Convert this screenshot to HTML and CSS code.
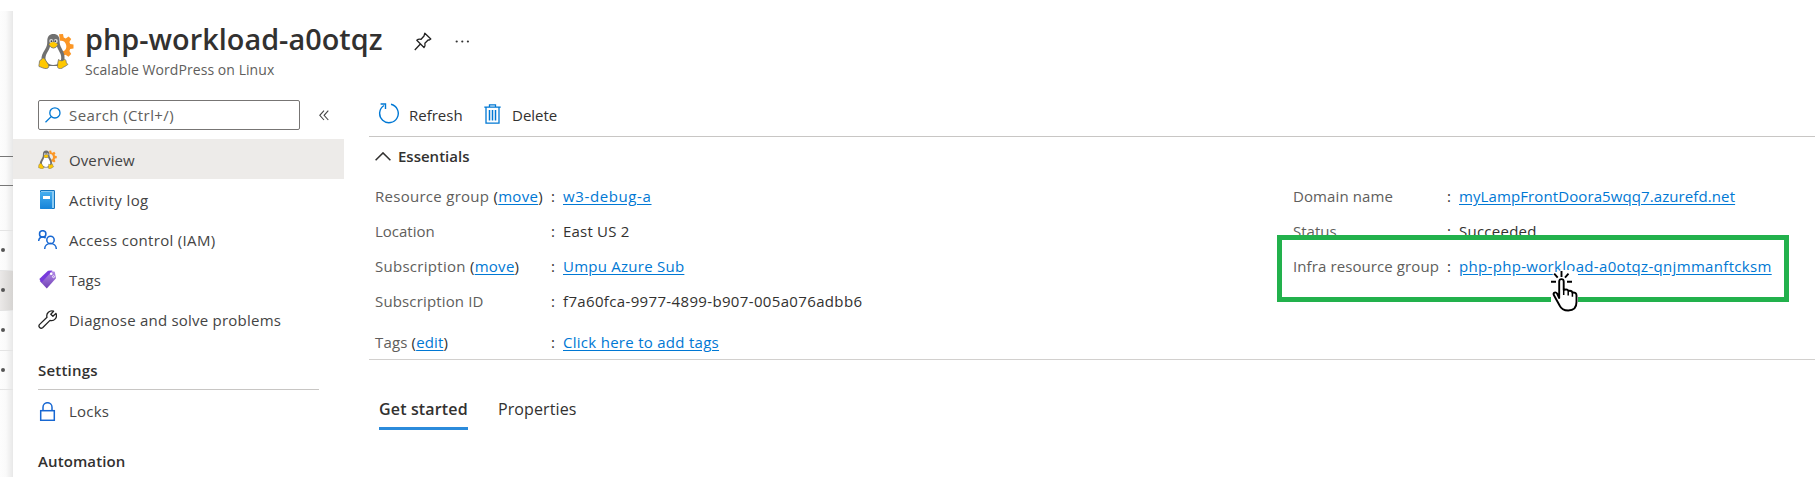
FILE: index.html
```
<!DOCTYPE html>
<html lang="en">
<head>
<meta charset="utf-8">
<title>php-workload-a0otqz</title>
<link rel="stylesheet" href="styles.css">
</head>
<body>
<svg width="0" height="0" class="defs" aria-hidden="true">
  <defs>
    <linearGradient id="book-fill" x1="0" y1="0" x2="0" y2="1"><stop offset="0" stop-color="#45aeef"/><stop offset="1" stop-color="#1683d8"/></linearGradient>
    <linearGradient id="tag-fill" x1="0" y1="0" x2="0" y2="1"><stop offset="0" stop-color="#b48be8"/><stop offset="1" stop-color="#7040b5"/></linearGradient>
    <symbol id="tux" viewBox="0 0 36 36">
      <path fill="#fb9625" d="M21 1.3l4-.3.7 3.5 2 .9 2.9-2 2.6 2.6-1.8 3 .8 2 3.3.6v3.8l-3.3.7-.8 2 1.8 3-2.7 2.6-3-2-1.8.8-1-4a5.6 5.6 0 0 0-2.6-10.8z"/>
      <path fill="#707070" d="M15.500 1c4 0 6 2.400 6 6.500 0 3 .5 5 2.300 8.200 2.200 3.800 3.200 7 2.600 11.300L24 33H7L3.500 27c-.3-4 1-6.500 3.500-10.500 2-3.400 2.300-5 2.300-8.500C9.300 3.500 11.500 1 15.500 1z"/>
      <path fill="#fff" d="M12 13.500c2 2.500 5 2.500 7 0 1 4 4.700 7 4.200 12-.3 3-2.700 6.500-8 6.500S7 28 7.500 24.500C8 20 11 18 12 13.500z"/>
      <circle cx="13.200" cy="8" r="2" fill="#ddd"/><circle cx="17.800" cy="8" r="2" fill="#ddd"/>
      <circle cx="13.500" cy="8.200" r=".9" fill="#444"/><circle cx="17.300" cy="8.200" r=".9" fill="#444"/>
      <path fill="#ffc800" d="M11 11.300c1.300-1.600 3-2.400 4.300-2.400s3.200 1 4.400 2.300c-1 2-2.700 3.500-4.400 3.500-1.600 0-3.200-1.600-4.300-3.400z"/>
      <path fill="#ffc800" stroke="#707070" stroke-width=".8" d="M1 33.500c-.4-1.300.5-3 .4-4.600 0-1.500.8-1.900 2-2.200 1-1.700 2.200-2.300 3.600-.4l3.500 5.400c.8 1.800.3 3.300-1.800 3.800C6 36 3.500 34 1 33.500z"/>
      <path fill="#ffc800" stroke="#707070" stroke-width=".8" d="M20.500 26.500c1.700 1.800 4.700 1.800 5.900-.3 1.600.3 1.700 2 2 3.500l1.400 1.800c-2 1.700-4 2.300-5.600 3.600-2 1.400-4.700.5-4.700-1.800.2-2.200.3-4.600 1-6.800z"/>
    </symbol>
  </defs>
</svg>

<div class="screen">
  <div class="underlay" aria-hidden="true">
    <div class="u-box"></div>
    <div class="u-gap"></div>
    <div class="u-row"></div>
    <div class="u-row u-selected"></div>
    <div class="u-row"></div>
    <div class="u-row"></div>
  </div>

  <div class="blade">
    <header class="head">
      <svg class="head-icon" width="36" height="36"><use href="#tux"/></svg>
      <div class="head-text">
        <div class="title-row">
          <h1 class="title">php-workload-a0otqz</h1>
          <svg class="pin" width="18" height="19" viewBox="0 0 18 19" fill="none" stroke="#222" stroke-width="1.300" stroke-linejoin="round"><path d="M10.800 1.200l6 5.800-1.500 1.100-1.200-.1-3.200 3.300c.4 1.700 0 3.200-.9 4.200L2.800 8.300c1-1 2.600-1.500 4.300-1L10 4zM6.400 12L.8 18"/></svg>
          <svg class="dots" width="15" height="3" viewBox="0 0 15 3" fill="#333"><circle cx="1.700" cy="1.500" r="1.100"/><circle cx="7.300" cy="1.500" r="1.100"/><circle cx="12.900" cy="1.500" r="1.100"/></svg>
        </div>
        <div class="subtitle">Scalable WordPress on Linux</div>
      </div>
    </header>

    <div class="body">
      <nav class="side">
        <div class="search-row">
          <div class="search">
            <svg width="16" height="16" viewBox="0 0 16 16" fill="none" stroke="#0078d4" stroke-width="1.300"><circle cx="9.900" cy="5.900" r="5.100"/><path d="M6.200 9.600L.5 15.300"/></svg>
            <span class="t-search">Search (Ctrl+/)</span>
          </div>
          <svg class="collapse" width="10" height="11" viewBox="0 0 10 11" fill="none" stroke="#444" stroke-width="1.100"><path d="M5 .7L.8 5.300 5 10M9.300.7L5.100 5.300 9.300 10"/></svg>
        </div>
        <a class="item active"><svg width="19" height="19"><use href="#tux"/></svg><span class="t-overview">Overview</span></a>
        <a class="item"><svg width="19" height="19" viewBox="0 0 19 19"><rect x="2" y="0" width="15" height="19" rx="1.200" fill="#1474bd"/><rect x="3" y="1" width="13" height="17" fill="#8bcaf2"/><path d="M2 2h12v17H3.200A1.200 1.200 0 0 1 2 17.800z" fill="url(#book-fill)"/><rect x="5" y="6" width="7" height="3" fill="#fff"/></svg><span class="t-activity">Activity log</span></a>
        <a class="item"><svg width="19" height="19" viewBox="0 0 19 19" fill="none" stroke="#1767d2" stroke-width="1.500"><circle cx="4.700" cy="3.900" r="3.200"/><path d="M.7 11c0-2.500 1.600-3.900 4-3.900 1.200 0 2.200.3 2.900 1"/><circle cx="12.500" cy="9.900" r="3.700"/><path d="M6.700 19c0-3.300 2.500-5.400 5.800-5.400s5.800 2.100 5.800 5.400"/></svg><span class="t-access">Access control (IAM)</span></a>
        <a class="item"><svg width="19" height="19" viewBox="0 0 19 19"><path d="M11.500.8l5.300.9 1.200 6.500-9.200 10.300L1.700 11z" fill="url(#tag-fill)"/><path d="M1.300 9L10 .7l4.500-.2L3.700 12.500z" fill="#773adc"/><circle cx="13.200" cy="3.700" r="1.300" fill="#fff"/><circle cx="15.500" cy="6.700" r="1" fill="none" stroke="#fff" stroke-width=".8"/></svg><span class="t-tags">Tags</span></a>
        <a class="item"><svg width="19" height="19" viewBox="0 0 19 19" fill="none" stroke="#222" stroke-width="1.300" stroke-linejoin="round"><path d="M15.600 1.200A5 5 0 0 0 9 7.300L1.400 14.600a2.300 2.300 0 0 0 3.200 3.200L12 10.400a5 5 0 0 0 5.900-7l-3 2.800-2.100-2z"/></svg><span class="t-diagnose">Diagnose and solve problems</span></a>
        <div class="section"><span class="t-settings">Settings</span></div>
        <a class="item locks"><svg width="19" height="19" viewBox="0 0 19 19" fill="none" stroke="#1767d2" stroke-width="1.500"><rect x="2.700" y="8.700" width="13.600" height="9.600"/><path d="M5 8.700V5.200a4.500 4.500 0 0 1 9 0v3.500"/></svg><span class="t-locks">Locks</span></a>
        <div class="section last"><span class="t-automation">Automation</span></div>
      </nav>

      <main class="main">
        <div class="toolbar">
          <svg width="21" height="21" viewBox="0 0 21 21" fill="none" stroke="#0078d4" stroke-width="1.400"><path d="M13 1.300A9.300 9.300 0 1 1 6 2.500M2.600 1h4.900v5"/></svg>
          <span class="t-refresh">Refresh</span>
          <svg class="trash" width="17" height="20" viewBox="0 0 17 20" fill="none" stroke="#0078d4" stroke-width="1.300"><path d="M.3 3.200h16.400M5.500 3V.8h6V3M2 3.200v16h13v-16"/><path d="M5.500 6v10.500M8.500 6v10.500M11.500 6v10.500" stroke-width="1.500"/></svg>
          <span class="t-delete">Delete</span>
        </div>
        <section class="essentials">
          <div class="ess-head"><svg width="16" height="9" viewBox="0 0 16 9" fill="none" stroke="#323130" stroke-width="1.500"><path d="M.6 8.300L8 .9l7.400 7.400"/></svg><span class="t-essentials">Essentials</span></div>
          <div class="ess-cols">
            <dl class="facts">
              <dt><span class="t-rg">Resource group <b>(</b><a>move</a><b>)</b></span></dt><dd><a class="t-w3">w3-debug-a</a></dd>
              <dt><span class="t-location">Location</span></dt><dd><span class="t-east">East US 2</span></dd>
              <dt><span class="t-sub">Subscription <b>(</b><a>move</a><b>)</b></span></dt><dd><a class="t-umpu">Umpu Azure Sub</a></dd>
              <dt><span class="t-subid">Subscription ID</span></dt><dd><span class="t-guid">f7a60fca-9977-4899-b907-005a076adbb6</span></dd>
              <dt><span class="t-tagsedit">Tags <b>(</b><a>edit</a><b>)</b></span></dt><dd><a class="t-click">Click here to add tags</a></dd>
            </dl>
            <dl class="facts right">
              <dt><span class="t-domain">Domain name</span></dt><dd><a class="t-lamp">myLampFrontDoora5wqq7.azurefd.net</a></dd>
              <dt><span class="t-status">Status</span></dt><dd><span class="t-succ">Succeeded</span></dd>
              <dt><span class="t-infra">Infra resource group</span></dt><dd><a class="t-php">php-php-workload-a0otqz-qnjmmanftcksm</a></dd>
            </dl>
          </div>
        </section>
        <div class="tabs">
          <a class="tab on"><span class="t-get">Get started</span></a>
          <a class="tab"><span class="t-props">Properties</span></a>
        </div>
      </main>
    </div>
  </div>

  <div class="highlight"></div>
  <svg class="hand" width="28" height="43" viewBox="0 0 28 43" fill="none" stroke="#000" stroke-width="1.900">
    <path fill="#fff" stroke="none" d="M1 5L10 0h10l7 4v39H0V20z"/>
    <path d="M10.500 1v6M3.200 3.700l3.500 4M17.500 3.700l-3.500 4M0 11.700h5M16 11.700h5"/>
    <path fill="#fff" stroke-linejoin="round" d="M8.200 28V11.500c0-3.200 4.500-3.200 4.500 0v8.300c3.300-.9 4.300 0 4.600 1.200 2.200-.5 3.700 0 4 1.500 2.800-.3 4.200.9 4.200 3V32c0 5.500-3.200 8.500-8.300 8.500-4.200 0-7-1.600-8.700-5.200L2.800 25c-1-2.600 1.900-3.500 3.300-1.500z"/>
    <path d="M12.700 19.500V25M17.200 21.500V25.500M21.400 22.700v4" stroke-width="1.500"/>
  </svg>
</div>
</body>
</html>
```
FILE: styles.css
```
* { box-sizing: border-box; }
body { margin: 0; background: #fff; color: #323130; font: 15px/20px "Open Sans", "Noto Sans", sans-serif; overflow: hidden; }
h1, dl, dd { margin: 0; }
.defs { position: absolute; }
.screen { position: relative; display: flex; height: 477px; padding-top: 11px; overflow: hidden; }

.underlay { width: 13px; flex: none; padding-top: 145px; background: linear-gradient(90deg, #fdfdfd 0, #fafafa 45%, #e8e8e8 100%); }
.u-box { height: 30px; border: solid #777; border-width: 1px 0; }
.u-gap { height: 44px; }
.u-row { height: 40px; border-top: 1px solid #e4e4e4; padding-top: 17px; }
.u-row:last-child { border-bottom: 1px solid #e4e4e4; }
.u-row::before { content: ""; display: block; width: 4px; height: 4px; margin-left: 1px; border-radius: 50%; background: #555; }
.u-selected { background: linear-gradient(90deg, #ebe9e8, #d6d4d2); }

.blade { flex: 1; min-width: 0; background: #fff; }
.head { display: flex; height: 82px; padding: 22px 0 0 25px; }
.head-icon { flex: none; margin-right: 11px; }
.title-row { display: flex; align-items: center; height: 36px; margin-top: -12px; }
.title { width: 297px; font-size: 28.800px; line-height: 36px; font-weight: 600; letter-spacing: .04px; white-space: nowrap; }
.pin { margin: 4px 0 0 32px; }
.dots { margin: 4px 0 0 23px; }
.subtitle { margin-top: 3px; font-size: 14px; line-height: 20px; letter-spacing: .06px; color: #605e5c; white-space: nowrap; }

.body { display: flex; }
.side { width: 331px; flex: none; }
.search-row { display: flex; align-items: center; height: 46px; padding: 0 0 2px 25px; }
.search { display: flex; align-items: center; gap: 7px; width: 262px; height: 30px; padding-left: 6px; border: 1px solid #777574; border-radius: 2px; color: #605e5c; }
.search span { padding-left: 1px; }
.collapse { margin-left: 19px; }
.item { display: flex; align-items: center; gap: 12px; height: 40px; padding-left: 25px; white-space: nowrap; color: #444; }
.item span { padding-top: 1px; }
.item.active { background: #edebe9; }
.section { width: 281px; height: 51px; margin-left: 25px; padding-top: 21px; border-bottom: 1px solid #c8c6c4; font-weight: 600; }
.locks { height: 43px; padding-bottom: 1px; }
.locks span { padding-top: 0; }
.section.last { padding-top: 18px; border: 0; }

.main { flex: 1; min-width: 0; padding-left: 25px; }
.toolbar { display: flex; align-items: center; height: 44px; padding: 0 0 2px 9px; border-bottom: 1px solid #c8c6c4; }
.toolbar span { margin-left: 10px; width: 52px; padding-top: 2px; }
.toolbar .trash { margin-left: 23px; }
.toolbar .t-delete { margin-left: 11px; }
.essentials { height: 214px; border-bottom: 1px solid #d2d0ce; padding-left: 6px; }
.ess-head { display: flex; align-items: center; gap: 7px; height: 20px; margin-top: 9px; font-weight: 600; }
.ess-cols { display: flex; margin-top: 13px; }
.facts { display: grid; grid-template-columns: 177px auto; grid-auto-rows: 35px; width: 918px; line-height: 35px; white-space: nowrap; }
.facts dt { color: #605e5c; }
.facts dt b { font-weight: 400; color: #323130; }
.facts dd { display: flex; }
.facts dd::before { content: ":"; width: 12px; flex: none; margin-left: -1px; }
.facts dt:nth-of-type(5), .facts dd:nth-of-type(5) { padding-top: 6px; }
.facts a { color: #0078d4; text-decoration: underline; text-underline-offset: 2px; }
.right { grid-template-columns: 155px auto; width: 500px; }
.tabs { display: flex; gap: 30px; padding: 35px 0 0 10px; font-size: 16px; line-height: 28px; }
.tab { height: 35px; white-space: nowrap; }
.on { width: 89px; border-bottom: 3px solid #2b8bdb; font-weight: 600; }

/* tracking */
.t-search { letter-spacing: .4px; }
.t-overview, .t-automation, .t-domain, .t-infra, .t-lamp, .t-props { letter-spacing: .1px; }
.t-subid, .t-get, .t-tagsedit { letter-spacing: .15px; }
.t-activity { letter-spacing: .4px; }
.t-access { letter-spacing: .32px; }
.t-diagnose { letter-spacing: .23px; }
.t-succ, .t-umpu { letter-spacing: .25px; }
.t-rg, .t-sub, .t-click { letter-spacing: .28px; }
.t-locks, .t-settings, .t-east { letter-spacing: .2px; }
.t-w3 { letter-spacing: .62px; }
.t-guid { letter-spacing: .35px; }
.t-php { letter-spacing: .32px; }

.highlight { position: absolute; left: 1277px; top: 235px; width: 512px; height: 67px; border: 5px solid #22b14c; }
.hand { position: absolute; left: 1551px; top: 270px; }
```
